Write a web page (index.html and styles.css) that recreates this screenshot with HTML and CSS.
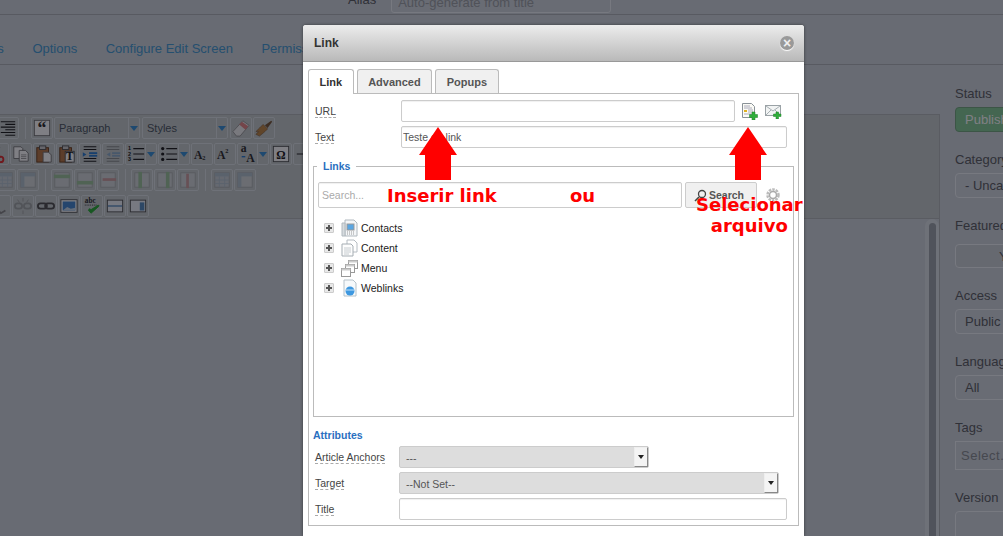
FILE: index.html
```html
<!DOCTYPE html>
<html>
<head>
<meta charset="utf-8">
<title>Edit Article - Link</title>
<link rel="stylesheet" href="styles.css">
</head>
<body>

<svg class="defs" width="0" height="0">
  <symbol id="i-right" viewBox="0 0 20 20"><path d="M2 3h16M7 6h11M2 9h16M7 12h11M2 15h16M7 18h11" stroke="#222" stroke-width="1.2"/></symbol>
  <symbol id="i-eraser" viewBox="0 0 20 20"><path d="M1 14L12 2l7 5L9 19H5z" fill="#f3f3f3" stroke="#999"/><path d="M11 3l7 5-3 4-7-6z" fill="#e88a8a"/></symbol>
  <symbol id="i-brush" viewBox="0 0 20 20"><path d="M11 7l3 3 5-7-1-1z" fill="#7a5a3a"/><path d="M9 6l5 5-3 3-6 5-4-2 3-3-3 0 4-4z" fill="#c08a4a" stroke="#7a5a3a" stroke-width=".6"/></symbol>
  <symbol id="i-cut" viewBox="0 0 20 20"><path d="M3 2l10 12M12 2L4 14" stroke="#777" stroke-width="1.4"/><circle cx="5" cy="16" r="3" fill="none" stroke="#e03030" stroke-width="2"/><circle cx="13" cy="16" r="3" fill="none" stroke="#e03030" stroke-width="2"/></symbol>
  <symbol id="i-copy" viewBox="0 0 20 20"><path d="M2 2h8l2 2v11H2z" fill="#fff" stroke="#777"/><path d="M8 6h7l3 3v9H8z" fill="#fff" stroke="#777"/><path d="M10 11h6M10 13h6M10 15h6" stroke="#999"/></symbol>
  <symbol id="i-paste" viewBox="0 0 20 20"><rect x="2" y="3" width="13" height="16" fill="#b87a4a" stroke="#6a4020"/><rect x="5" y="1" width="7" height="4" fill="#ccc" stroke="#555"/><path d="M9 8h6l3 3v8H9z" fill="#fff" stroke="#777"/></symbol>
  <symbol id="i-paste-base" viewBox="0 0 20 20"><rect x="2" y="3" width="13" height="16" fill="#b87a4a" stroke="#6a4020"/><rect x="5" y="1" width="7" height="4" fill="#ccc" stroke="#555"/><rect x="8" y="7" width="10" height="12" fill="#fff" stroke="#555"/></symbol>
  <symbol id="i-indent" viewBox="0 0 20 20"><path d="M3 2h14M3 18h14M3 5h14M3 15h14" stroke="#222" stroke-width="1.2"/><rect x="9" y="8" width="9" height="2" fill="#2f7fd0"/><rect x="9" y="11" width="9" height="2" fill="#2f7fd0"/><path d="M2 8l4 2.500-4 2.500z" fill="#2f7fd0"/></symbol>
  <symbol id="i-outdent" viewBox="0 0 20 20"><g opacity=".35"><path d="M3 2h14M3 18h14M3 5h14M3 15h14" stroke="#222" stroke-width="1.2"/><rect x="9" y="8" width="9" height="2" fill="#2f7fd0"/><rect x="9" y="11" width="9" height="2" fill="#2f7fd0"/><path d="M7 8L3 10.500 7 13z" fill="#2f7fd0"/></g></symbol>
  <symbol id="i-ul" viewBox="0 0 20 20"><path d="M7 4h12M7 10h12M7 16h12" stroke="#222" stroke-width="1.300"/><circle cx="3" cy="4" r="1.800" fill="#222"/><circle cx="3" cy="10" r="1.800" fill="#222"/><circle cx="3" cy="16" r="1.800" fill="#222"/></symbol>
  <symbol id="i-hr" viewBox="0 0 20 20"><path d="M2 10h16" stroke="#555" stroke-width="1.500"/></symbol>
  <symbol id="i-table" viewBox="0 0 20 20"><g opacity=".3"><rect x="2" y="2" width="16" height="16" fill="#dbe6f3" stroke="#777"/><rect x="2" y="2" width="16" height="4" fill="#8fb3d9"/><path d="M2 10h16M2 14h16M7 6v12M13 6v12" stroke="#8fb3d9"/></g></symbol>
  <symbol id="i-cell" viewBox="0 0 20 20"><g opacity=".3"><rect x="2" y="2" width="16" height="16" fill="#fff" stroke="#777"/><rect x="2" y="2" width="16" height="4" fill="#8fb3d9"/><rect x="2" y="2" width="4" height="16" fill="#8fb3d9"/></g></symbol>
  <symbol id="i-rowa" viewBox="0 0 20 20"><g opacity=".35"><rect x="2" y="2" width="16" height="16" fill="#eef3f8" stroke="#888"/><rect x="1" y="4" width="18" height="4" fill="#5dbb4a"/></g></symbol>
  <symbol id="i-rowb" viewBox="0 0 20 20"><g opacity=".35"><rect x="2" y="2" width="16" height="16" fill="#eef3f8" stroke="#888"/><rect x="1" y="11" width="18" height="4" fill="#5dbb4a"/></g></symbol>
  <symbol id="i-rowd" viewBox="0 0 20 20"><g opacity=".35"><rect x="2" y="2" width="16" height="16" fill="#eef3f8" stroke="#888"/><rect x="4" y="8" width="15" height="3" fill="#e05050"/></g></symbol>
  <symbol id="i-cola" viewBox="0 0 20 20"><g opacity=".35"><rect x="2" y="2" width="16" height="16" fill="#eef3f8" stroke="#888"/><rect x="6" y="1" width="4" height="18" fill="#5dbb4a"/></g></symbol>
  <symbol id="i-colb" viewBox="0 0 20 20"><g opacity=".35"><rect x="2" y="2" width="16" height="16" fill="#eef3f8" stroke="#888"/><rect x="11" y="1" width="4" height="18" fill="#5dbb4a"/></g></symbol>
  <symbol id="i-cold" viewBox="0 0 20 20"><g opacity=".35"><rect x="2" y="2" width="16" height="16" fill="#eef3f8" stroke="#888"/><rect x="8" y="3" width="3" height="16" fill="#e05050"/></g></symbol>
  <symbol id="i-anchor" viewBox="0 0 20 20"><path d="M5 2v10l6 6 5-3" fill="none" stroke="#888" stroke-width="2"/></symbol>
  <symbol id="i-unlink" viewBox="0 0 20 20"><g opacity=".3" fill="none" stroke="#555" stroke-width="2"><rect x="1" y="7" width="8" height="6" rx="3"/><rect x="11" y="7" width="8" height="6" rx="3"/><path d="M10 1v4M10 15v4M4 3l2 3M16 3l-2 3" stroke-width="1"/></g></symbol>
  <symbol id="i-link" viewBox="0 0 20 20"><g fill="none" stroke="#555" stroke-width="2"><rect x="1" y="7" width="10" height="6" rx="3"/><rect x="9" y="7" width="10" height="6" rx="3"/></g></symbol>
  <symbol id="i-image" viewBox="0 0 20 20"><rect x="1" y="3" width="18" height="14" fill="#fff" stroke="#555"/><rect x="3" y="5" width="14" height="10" fill="#4a8ad0"/><path d="M3 15l5-4 4 2 5-1v3z" fill="#c8d8e8"/></symbol>
  <symbol id="i-split" viewBox="0 0 20 20"><rect x="1.500" y="3.500" width="17" height="13" fill="#eef3f8" stroke="#555"/><path d="M2 10h16" stroke="#5a8fc0" stroke-width="1.500"/></symbol>
  <symbol id="i-page" viewBox="0 0 20 20"><rect x="1.500" y="3.500" width="17" height="13" fill="#eef3f8" stroke="#555"/><rect x="12" y="6" width="5" height="9" fill="#5a8fc0"/></symbol>

  <symbol id="i-contacts" viewBox="0 0 17 18"><path d="M4 1h9l3 3v13H4z" fill="#f4f6f8" stroke="#b0b8be"/><path d="M1 4h3v13H1z" fill="#d6dbde" stroke="#b0b8be"/><rect x="6" y="5" width="7" height="6" fill="#5aa6e2" stroke="#999"/><path d="M6 13h8M6 15h8" stroke="#999" stroke-dasharray="1 1"/></symbol>
  <symbol id="i-content" viewBox="0 0 17 18"><path d="M6 1h7l3 3v9H6z" fill="#fff" stroke="#b5bcc2"/><path d="M1 5h9l2 2v10H1z" fill="#fdfdfd" stroke="#a5adb3"/><path d="M3 9h7M3 11h7M3 13h7M3 15h5" stroke="#c6ccd0"/></symbol>
  <symbol id="i-menu" viewBox="0 0 17 18"><rect x="7.500" y="1.500" width="9" height="8" fill="#fff" stroke="#999"/><rect x="7.500" y="1.500" width="9" height="2" fill="#ccc"/><rect x="4.500" y="5.500" width="9" height="8" fill="#fff" stroke="#999"/><rect x="4.500" y="5.500" width="9" height="2" fill="#ccc"/><rect x=".5" y="9.500" width="9" height="8" fill="#fff" stroke="#999"/><rect x=".5" y="9.500" width="9" height="2" fill="#ccc"/></symbol>
  <symbol id="i-weblinks" viewBox="0 0 17 18"><path d="M3 1h9l3 3v13H3z" fill="#f6f9fb" stroke="#b5c2ca"/><circle cx="9" cy="12" r="4.500" fill="#3d98e0"/><path d="M5 11h8" stroke="#bfe0f8"/></symbol>
  <symbol id="i-newfile" viewBox="0 0 17 18"><path d="M1.500 1.500h9l3 3v11h-12z" fill="#fbfbf6" stroke="#8a9298"/><path d="M3 4h6M3 6h8M7 8h5M7 10h5M3 12h8" stroke="#aab"/><rect x="3" y="8" width="3" height="2" fill="#e0b020"/><path d="M11 10h3v2.500h2.500v3H14V18h-3v-2.500H8.500v-3H11z" fill="#2fae3a" stroke="#1c7f28" stroke-width=".5"/></symbol>
  <symbol id="i-newmail" viewBox="0 0 17 15"><rect x=".5" y="1.500" width="15" height="10" fill="#f2f4f4" stroke="#9aa2a6"/><path d="M1 2l7 5 7-5M1 11l5-5M15 11l-5-5" fill="none" stroke="#a8b0b4"/><path d="M11 8h2.500v2H16v2.500h-2.500V15H11v-2.500H8.500V10H11z" fill="#2fae3a" stroke="#1c7f28" stroke-width=".5"/></symbol>
</svg>

<div class="page">
  <div class="topbar">
    <span class="alias-label">Alias</span>
    <input class="alias-input" placeholder="Auto-generate from title">
  </div>
  <div class="nav">
    <a>Versions</a><a>Options</a><a>Configure Edit Screen</a><a>Permissions</a>
  </div>

  <div class="main">
    <div class="editor">
      <div class="toolbar">
        <div class="tb-row tb-row1">
          <span class="btn"><svg><use href="#i-right"/></svg></span>
          <span class="sep"></span>
          <span class="btn"><svg viewBox="0 0 20 20"><rect x="1.500" y="1.500" width="17" height="17" fill="#fff" stroke="#777"/><text x="10" y="17" class="ic-serif" text-anchor="middle">“</text></svg></span>
          <span class="listbox"><span class="lb-text">Paragraph</span><span class="lb-arrow"></span></span>
          <span class="listbox lb-gap"><span class="lb-text">Styles</span><span class="lb-arrow"></span></span>
          <span class="btn lb-gap"><svg><use href="#i-eraser"/></svg></span>
          <span class="btn"><svg><use href="#i-brush"/></svg></span>
        </div>
        <div class="tb-row tb-row2">
          <span class="btn"><svg><use href="#i-cut"/></svg></span>
          <span class="btn"><svg><use href="#i-copy"/></svg></span>
          <span class="btn"><svg><use href="#i-paste"/></svg></span>
          <span class="btn"><svg viewBox="0 0 20 20"><use href="#i-paste-base" width="20" height="20"/><text x="13" y="17" class="ic-serif-t" text-anchor="middle">T</text></svg></span>
          <span class="btn"><svg><use href="#i-indent"/></svg></span>
          <span class="btn"><svg><use href="#i-outdent"/></svg></span>
          <span class="split"><span class="btn-main"><svg viewBox="0 0 20 20"><path d="M7 4h12M7 10h12M7 16h12" stroke="#222" stroke-width="1.300"/><text x="1" y="6" class="ic-num">1</text><text x="1" y="12" class="ic-num">2</text><text x="1" y="18" class="ic-num">3</text></svg></span><span class="lb-arrow"></span></span>
          <span class="split"><span class="btn-main"><svg><use href="#i-ul"/></svg></span><span class="lb-arrow"></span></span>
          <span class="btn"><svg viewBox="0 0 20 20"><text x="1" y="15" class="ic-serif-a">A<tspan class="ic-small" dy="2">2</tspan></text></svg></span>
          <span class="btn"><svg viewBox="0 0 20 20"><text x="1" y="15" class="ic-serif-a">A<tspan class="ic-small" dy="-6">2</tspan></text></svg></span>
          <span class="split"><span class="btn-main"><svg viewBox="0 0 20 20"><text x="2" y="8" class="ic-serif-a">a</text><text x="8" y="19" class="ic-serif-a">A</text><path d="M3 13h4" stroke="#2f7fd0" stroke-width="1.500"/></svg></span><span class="lb-arrow"></span></span>
          <span class="btn"><svg viewBox="0 0 20 20"><rect x="1.500" y="1.500" width="17" height="17" fill="#fff" stroke="#555"/><text x="10" y="15" class="ic-serif-t" text-anchor="middle">Ω</text></svg></span>
          <span class="btn"><svg><use href="#i-hr"/></svg></span>
        </div>
        <div class="tb-row tb-row3">
          <span class="btn"><svg><use href="#i-table"/></svg></span>
          <span class="btn"><svg><use href="#i-cell"/></svg></span>
          <span class="sep"></span>
          <span class="btn"><svg><use href="#i-rowa"/></svg></span>
          <span class="btn"><svg><use href="#i-rowb"/></svg></span>
          <span class="btn"><svg><use href="#i-rowd"/></svg></span>
          <span class="sep"></span>
          <span class="btn"><svg><use href="#i-cola"/></svg></span>
          <span class="btn"><svg><use href="#i-colb"/></svg></span>
          <span class="btn"><svg><use href="#i-cold"/></svg></span>
          <span class="sep"></span>
          <span class="btn"><svg><use href="#i-table"/></svg></span>
          <span class="btn"><svg><use href="#i-cell"/></svg></span>
        </div>
        <div class="tb-row tb-row4">
          <span class="btn"><svg><use href="#i-anchor"/></svg></span>
          <span class="btn"><svg><use href="#i-unlink"/></svg></span>
          <span class="btn"><svg><use href="#i-link"/></svg></span>
          <span class="btn"><svg><use href="#i-image"/></svg></span>
          <span class="btn"><svg viewBox="0 0 20 20"><text x="2" y="7" class="ic-abc">abc</text><path d="M2 9h13" stroke="#333" stroke-dasharray="1 1"/><path d="M6 15l3 3 9-8-1-1-8 5-2-1z" fill="#2fae3a" stroke="#2fae3a"/></svg></span>
          <span class="btn"><svg><use href="#i-split"/></svg></span>
          <span class="btn"><svg><use href="#i-page"/></svg></span>
        </div>
      </div>
      <div class="editor-area">
        <div class="scroll-track"><div class="scroll-thumb"></div></div>
      </div>
    </div>

    <div class="side">
      <div class="side-group"><label>Status</label><div class="side-ctl ctl-green">Publish</div></div>
      <div class="side-group"><label>Category</label><div class="side-ctl">- Uncategorised</div></div>
      <div class="side-group group-tall"><label>Featured</label><div class="side-ctl ctl-btn">Yes</div></div>
      <div class="side-group"><label>Access</label><div class="side-ctl">Public</div></div>
      <div class="side-group"><label>Language</label><div class="side-ctl">All</div></div>
      <div class="side-group group-tall"><label>Tags</label><div class="side-ctl ctl-tags">Select...</div></div>
      <div class="side-group"><label>Version</label><div class="side-ctl ctl-note"></div></div>
    </div>
  </div>
</div>

<div class="backdrop"></div>

<div class="modal">
  <div class="modal-head">
    <span class="modal-title">Link</span>
    <span class="modal-close">×</span>
  </div>
  <div class="modal-body">
    <div class="tabs">
      <span class="tab tab-on">Link</span>
      <span class="tab">Advanced</span>
      <span class="tab">Popups</span>
    </div>
    <div class="panel">
      <div class="row row-url">
        <span class="lbl"><span>URL</span></span>
        <input class="txt url-input">
        <svg class="ico-file"><use href="#i-newfile"/></svg>
        <svg class="ico-mail"><use href="#i-newmail"/></svg>
      </div>
      <div class="row row-url">
        <span class="lbl"><span>Text</span></span>
        <input class="txt text-input" value="Teste de link">
      </div>

      <fieldset class="links">
        <legend>Links</legend>
        <div class="search-row">
          <input class="txt search-input" placeholder="Search...">
          <span class="search-btn">
            <svg width="13" height="13" viewBox="0 0 13 13"><circle cx="8" cy="5" r="3.500" fill="none" stroke="#444" stroke-width="1.300"/><path d="M5 8l-4 4" stroke="#444" stroke-width="1.600"/></svg>
            Search
          </span>
          <svg class="gear" width="16" height="16" viewBox="0 0 16 16"><circle cx="8" cy="8" r="5.500" fill="none" stroke="#bbb" stroke-width="2.500" stroke-dasharray="2.500 1"/><circle cx="8" cy="8" r="3.500" fill="none" stroke="#aaa" stroke-width="1.500"/></svg>
        </div>
        <ul class="tree">
          <li><span class="plus"></span><svg class="tree-ico"><use href="#i-contacts"/></svg>Contacts</li>
          <li><span class="plus"></span><svg class="tree-ico"><use href="#i-content"/></svg>Content</li>
          <li><span class="plus"></span><svg class="tree-ico"><use href="#i-menu"/></svg>Menu</li>
          <li><span class="plus"></span><svg class="tree-ico"><use href="#i-weblinks"/></svg>Weblinks</li>
        </ul>
      </fieldset>

      <div class="attr-title">Attributes</div>
      <div class="row row-attr">
        <span class="lbl"><span>Article Anchors</span></span>
        <span class="sel sel-short">---<span class="sel-arrow"></span></span>
      </div>
      <div class="row row-attr">
        <span class="lbl"><span>Target</span></span>
        <span class="sel sel-long">--Not Set--<span class="sel-arrow"></span></span>
      </div>
      <div class="row row-attr">
        <span class="lbl"><span>Title</span></span>
        <input class="txt title-input">
      </div>
    </div>
  </div>
</div>

<!-- notas vermelhas por cima do print -->
<svg class="arrow arrow-url" width="38" height="54" viewBox="0 0 38 54"><polygon points="19,0 38,28 32,28 32,53 6,53 6,28 0,28"/></svg>
<svg class="arrow arrow-file" width="38" height="54" viewBox="0 0 38 54"><polygon points="19,0 38,28 32,28 32,53 6,53 6,28 0,28"/></svg>
<span class="note note-link">Inserir link</span>
<span class="note note-ou">ou</span>
<span class="note note-file">Selecionar<br>arquivo</span>

</body>
</html>
```

FILE: styles.css
```css
html, body {
  margin: 0;
  padding: 0;
  width: 1003px;
  height: 536px;
  overflow: hidden;
  background: #d0d6dc;
}
body {
  position: relative;
  font-family: "Liberation Sans", Arial, sans-serif;
  font-size: 13px;
  color: #606266;
}
.defs {
  position: absolute;
}
.ic-serif { font: bold 20px "Liberation Serif", serif; fill: #333; }
.ic-serif-t { font: bold 13px "Liberation Serif", serif; fill: #222; }
.ic-serif-a { font: bold 13px "Liberation Serif", serif; fill: #333; }
.ic-small { font: bold 7px "Liberation Serif", serif; fill: #333; }
.ic-num { font: bold 6px "Liberation Sans", sans-serif; fill: #222; }
.ic-abc { font: bold 8px "Liberation Serif", serif; fill: #333; }

/* page under the backdrop */
.page {
  width: 1003px;
  height: 536px;
  overflow: hidden;
}
.topbar {
  height: 15px;
  border-bottom: 1px solid #b0b4b8;
  display: flex;
  align-items: flex-end;
  gap: 15px;
  padding-left: 348px;
  box-sizing: border-box;
}
.alias-label {
  margin-bottom: 7px;
}
.alias-input {
  width: 220px;
  height: 21px;
  box-sizing: border-box;
  border: 1px solid #eef2f6;
  border-radius: 3px;
  padding: 0 6px;
  margin-bottom: 1px;
  background: #d2d8de;
  font: 13px "Liberation Sans", sans-serif;
  flex: none;
}
.alias-input::placeholder { color: #a0a4a8; }
.nav {
  height: 50px;
  box-sizing: border-box;
  border-bottom: 1px solid #b0b4b8;
  display: flex;
  gap: 28.5px;
  margin-left: -46px;
  padding-top: 26px;
  white-space: nowrap;
}
.nav a {
  color: #4a9ed4;
}
.main {
  display: flex;
  gap: 15px;
}
.editor {
  width: 940px;
  flex: none;
  padding-top: 49px;
}
.toolbar {
  height: 105px;
  box-sizing: border-box;
  background: #c6cccc;
  border: 1px solid #b4b8ba;
  border-left: 0;
  padding-top: 2px;
  overflow: hidden;
}
.tb-row {
  display: flex;
  gap: 1px;
  height: 22px;
  margin-bottom: 4px;
}
.tb-row1 { margin-left: -3px; }
.tb-row2 { margin-left: -13px; }
.tb-row3 { margin-left: -6px; }
.tb-row4 { margin-left: -11px; }
.btn, .split, .listbox {
  flex: none;
  height: 22px;
  box-sizing: border-box;
  border: 1px solid #dde2e6;
  border-radius: 2px;
  display: flex;
  align-items: center;
}
.btn {
  width: 22px;
  justify-content: center;
}
.btn svg, .btn-main svg {
  width: 18px;
  height: 18px;
}
.split {
  width: 32px;
}
.btn-main {
  width: 20px;
  display: flex;
  justify-content: center;
}
.sep {
  flex: none;
  width: 1px;
  height: 22px;
  background: #dde2e6;
  margin: 0 4px 0 5px;
}
.listbox {
  width: 86px;
}
.lb-gap {
  margin-left: 1px;
}
.lb-text {
  flex: 1;
  padding-left: 4px;
  font-size: 11px;
  color: #505a64;
  line-height: 20px;
}
.lb-arrow {
  flex: none;
  width: 10px;
  height: 20px;
  border-left: 1px solid #dde2e6;
  position: relative;
}
.lb-arrow::after {
  content: "";
  position: absolute;
  left: 1px;
  top: 8px;
  border: 4px solid transparent;
  border-top: 5px solid #3d93d6;
  border-bottom: 0;
}
.editor-area {
  height: 340px;
  border-right: 1px solid #b4b8ba;
  position: relative;
}
.scroll-track {
  position: absolute;
  right: 0;
  top: 0;
  bottom: 0;
  width: 14px;
  background: #dce2e6;
  border-radius: 7px 7px 0 0;
}
.scroll-thumb {
  position: absolute;
  left: 4px;
  top: 4px;
  bottom: 0;
  width: 7px;
  background: #a0a6ac;
  border-radius: 4px 4px 0 0;
}

.side {
  flex: none;
  width: 200px;
  padding-top: 22px;
  white-space: nowrap;
}
.side-group {
  height: 66px;
}
.group-tall {
  height: 70px;
}
.side-group label {
  display: block;
  line-height: 13px;
  margin-bottom: 7px;
}
.side-ctl {
  height: 25px;
  box-sizing: border-box;
  border: 1px solid #eef2f6;
  border-radius: 4px;
  padding-left: 9px;
  line-height: 23px;
  background: #d2d8de;
}
.ctl-green {
  background: #88cc98;
  border-color: #78aa82;
  color: #fff;
}
.ctl-btn {
  margin-top: 12px;
  height: 24px;
  padding-left: 43px;
  background: #cdd2d6;
}
.ctl-tags {
  height: 29px;
  line-height: 27px;
  padding-left: 5px;
  border-radius: 0;
  color: #8c9094;
  letter-spacing: .5px;
}
.ctl-note {
  height: 60px;
}

.backdrop {
  position: absolute;
  left: 0;
  top: 0;
  width: 1003px;
  height: 536px;
  background: rgba(0, 0, 10, .5);
}

/* link dialog */
.modal {
  position: absolute;
  left: 303px;
  top: 25px;
  width: 501px;
  height: 511px;
  box-sizing: border-box;
  background: #fff;
  border-radius: 3px 3px 0 0;
  box-shadow: 0 0 3px rgba(0, 0, 0, .5);
}
.modal-head {
  height: 37px;
  box-sizing: border-box;
  display: flex;
  justify-content: space-between;
  align-items: center;
  padding: 0 11px;
  background: linear-gradient(#ececec, #b9b9b9);
  border-bottom: 1px solid #999;
  border-radius: 3px 3px 0 0;
}
.modal-title {
  font-size: 12px;
  font-weight: bold;
  color: #333;
}
.modal-close {
  width: 14px;
  height: 14px;
  border-radius: 50%;
  background: #999;
  color: #eee;
  font-size: 14px;
  font-weight: bold;
  line-height: 14px;
  text-align: center;
  margin-right: -1px;
  box-shadow: 0 1px 1px #fff;
}
.modal-body {
  padding: 7px 5px 0;
}
.tabs {
  display: flex;
  gap: 3px;
  height: 24px;
  position: relative;
}
.tab {
  box-sizing: border-box;
  height: 24px;
  padding: 0 10.5px;
  border: 1px solid #bbb;
  border-bottom: 0;
  border-radius: 3px 3px 0 0;
  background: #f0f0f0;
  font-size: 11px;
  font-weight: bold;
  line-height: 24px;
  color: #555;
}
.tab-on {
  height: 25px;
  background: #fff;
  color: #333;
  position: relative;
  z-index: 1;
}
.panel {
  height: 433px;
  box-sizing: border-box;
  border: 1px solid #bbb;
  padding: 6px 4px 0;
  position: relative;
}
.row {
  display: flex;
  align-items: center;
  height: 22px;
  margin-bottom: 4px;
}
.lbl {
  flex: none;
  padding-left: 2px;
  font-size: 10.5px;
  color: #444;
  line-height: 13px;
}
.lbl span {
  border-bottom: 1px dashed #aaa;
}
.row-url .lbl {
  width: 86px;
}
.row-attr .lbl {
  width: 84px;
}
.txt {
  box-sizing: border-box;
  height: 22px;
  border: 1px solid #ccc;
  border-radius: 2px;
  padding: 0 1px;
  font: 10.5px "Liberation Sans", sans-serif;
  color: #555;
  background: #fff;
  box-shadow: inset 0 1px 1px #f0f0f0;
}
.url-input {
  width: 334px;
  flex: none;
}
.text-input {
  width: 386px;
  flex: none;
}
.ico-file {
  width: 17px;
  height: 18px;
  margin-left: 6px;
  flex: none;
}
.ico-mail {
  width: 17px;
  height: 15px;
  margin-left: 7px;
  flex: none;
}
.links {
  height: 257px;
  box-sizing: border-box;
  margin: 12px 0 0;
  padding: 9px 4px 0;
  border: 1px solid #bbb;
  min-width: 0;
}
.links legend {
  margin-left: -1px;
  padding: 0 6px;
  font-size: 10.5px;
  font-weight: bold;
  line-height: 13px;
  color: #2a6fc0;
}
.search-row {
  display: flex;
  align-items: center;
  height: 26px;
}
.search-input {
  width: 364px;
  height: 26px;
  padding-left: 3px;
  flex: none;
}
.search-input::placeholder { color: #aaa; }
.search-btn {
  flex: none;
  width: 72px;
  height: 26px;
  box-sizing: border-box;
  margin-left: 3px;
  border: 1px solid #ccc;
  border-radius: 2px;
  background: #f0f0f0;
  color: #555;
  font-size: 10.5px;
  font-weight: bold;
  display: flex;
  align-items: center;
  gap: 2px;
  padding-left: 8px;
}
.gear {
  flex: none;
  margin-left: 8px;
}
.tree {
  list-style: none;
  margin: 10px 0 0;
  padding: 0 0 0 6px;
}
.tree li {
  display: flex;
  align-items: center;
  height: 20px;
  font-size: 10.5px;
  color: #222;
}
.plus {
  flex: none;
  width: 10px;
  height: 10px;
  box-sizing: border-box;
  border: 1px solid #ccc;
  border-radius: 1px;
  background:
    linear-gradient(#555, #555) center / 6px 2px no-repeat,
    linear-gradient(#555, #555) center / 2px 6px no-repeat,
    #e8e8e8;
}
.tree-ico {
  flex: none;
  width: 17px;
  height: 18px;
  margin: 0 3px 0 7px;
}
.attr-title {
  margin: 12px 0 4px;
  font-size: 10.5px;
  font-weight: bold;
  line-height: 13px;
  color: #2a6fc0;
}
.sel {
  flex: none;
  box-sizing: border-box;
  height: 22px;
  border: 1px solid #ccc;
  border-radius: 2px;
  background: #ddd;
  padding-left: 6px;
  font-size: 10.5px;
  line-height: 22px;
  color: #555;
  position: relative;
}
.sel-short { width: 250px; }
.sel-long { width: 380px; }
.sel-arrow {
  position: absolute;
  right: 0;
  top: 0;
  bottom: 0;
  width: 14px;
  box-sizing: border-box;
  background: #f4f4f4;
  border: 1px solid #888;
  border-top-color: #eee;
  border-left-color: #eee;
}
.sel-arrow::after {
  content: "";
  position: absolute;
  left: 3px;
  top: 7px;
  border: 3.500px solid transparent;
  border-top: 4px solid #222;
  border-bottom: 0;
}
.title-input {
  width: 388px;
  flex: none;
}

/* annotations */
.arrow {
  position: absolute;
  top: 127px;
  fill: #f00;
}
.arrow-url { left: 419px; }
.arrow-file { left: 729px; }
.note {
  position: absolute;
  font-family: "DejaVu Sans", sans-serif;
  font-size: 18px;
  font-weight: bold;
  line-height: 21px;
  color: #f00;
  white-space: nowrap;
}
.note-link { left: 387px; top: 185px; }
.note-ou { left: 570px; top: 185px; }
.note-file { left: 696px; top: 194px; text-align: center; }
```
